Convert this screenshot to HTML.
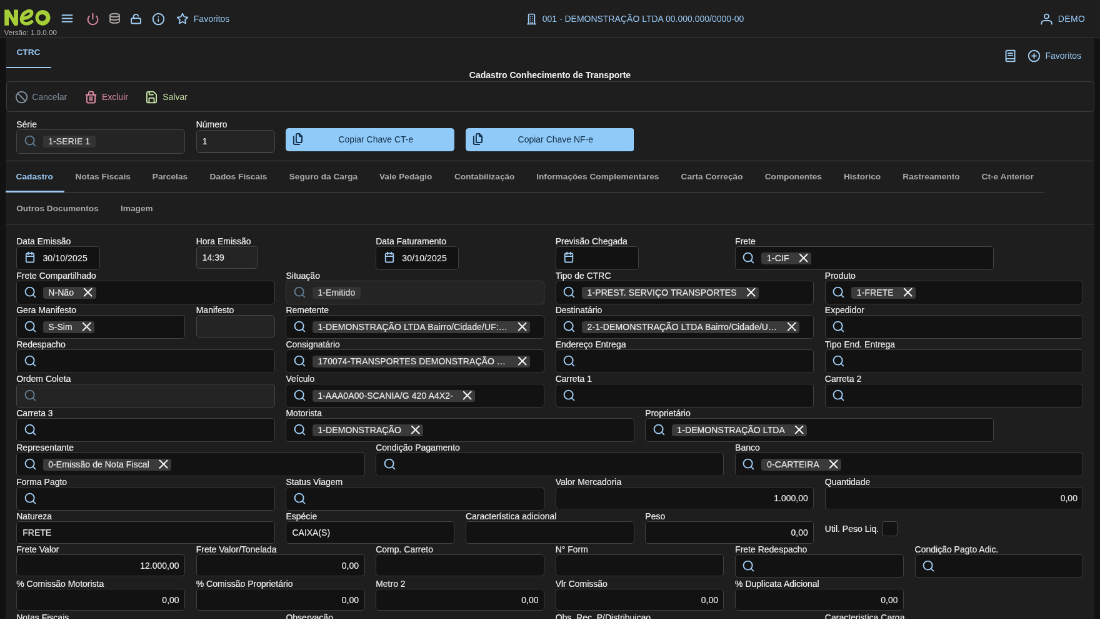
<!DOCTYPE html>
<html lang="pt-BR"><head><meta charset="utf-8"><title>NEO - CTRC</title>
<style>
html,body{margin:0;padding:0;background:#121212;overflow:hidden;}
body{width:1100px;height:619px;position:relative;font-family:"Liberation Sans",sans-serif;}
#app{position:absolute;left:0;top:0;width:1760px;height:991px;transform:scale(0.625);transform-origin:0 0;
 font-family:"Liberation Sans",sans-serif;font-size:14px;color:#dedede;overflow:hidden;will-change:transform;}
#app *{box-sizing:border-box;}
.abs{position:absolute;}
.ic{position:absolute;fill:none;stroke-linecap:round;stroke-linejoin:round;overflow:visible;}
.t{position:absolute;white-space:nowrap;line-height:18px;height:18px;}
.hdr{position:absolute;left:0;top:0;width:1760px;height:60px;background:#1e1e1e;border-bottom:1px solid #444;}
.panel{position:absolute;left:8.7px;top:61px;width:1742.6px;height:940px;background:#1e1e1e;}
.lbl{position:absolute;white-space:nowrap;font-size:14px;line-height:18px;height:18px;color:#ededed;-webkit-text-stroke:0.22px #ededed;}
.fld{position:absolute;height:37.5px;background:#121212;border:1px solid #414141;border-radius:5px;}
.fld.dis{background:#242424;border-color:#464646;}
.chip{position:absolute;top:8.9px;height:19px;background:#3a3a3a;border-radius:4px;color:#e8e8e8;-webkit-text-stroke:0.2px #e8e8e8;font-size:14px;line-height:19px;white-space:nowrap;padding:0 0 0 8.6px;overflow:hidden;display:flex;align-items:center;}
.ct{letter-spacing:0.09px;flex:1 1 auto;overflow:hidden;text-overflow:ellipsis;white-space:nowrap;min-width:0;}
.cx{flex:0 0 auto;width:23.4px;height:23.4px;margin-left:11.2px;fill:none;stroke:#f4f4f4;stroke-width:2.1;stroke-linecap:round;stroke-linejoin:round;}
.fld.dis .chip{background:#343434;color:#d8d8d8;}
.val{position:absolute;top:0;height:35.5px;line-height:35.5px;font-size:14px;color:#e8e8e8;-webkit-text-stroke:0.2px #e8e8e8;white-space:nowrap;}
.tab{position:absolute;font-weight:bold;font-size:13.7px;line-height:18px;color:#a9a9a9;white-space:nowrap;}
.hl{position:absolute;height:1px;background:#4a4a4a;}
.btn{position:absolute;background:#90caf9;border-radius:5px;color:#14304a;font-size:14px;text-align:center;}
</style></head>
<body>
<div id="app">
<div class="hdr"></div>
<svg class="abs" style="left:0;top:0;width:96px;height:64px" viewBox="0 0 60 40">
<path fill="#a6ce39" d="M4.5 25.5V9.7H8.9L13.8 18.2V9.7H18.1V23.8Q18.1 25.6 16.3 25.6H14.3L8.8 16.4V25.5Z"/>
<path fill="none" stroke="#a6ce39" stroke-width="3.4" stroke-linecap="round" stroke-linejoin="round" d="M24.0 18.3C27.4 18.1 31.6 15.9 31.7 12.9C31.8 10.8 28.9 10.6 26.8 11.5C23.5 12.9 21.3 16.2 21.5 19.4C21.7 22.5 24.4 23.9 27.1 23.6C29.0 23.4 30.6 22.7 31.7 21.6"/>
<path fill="#a6ce39" fill-rule="evenodd" d="M42.8 10A7.5 7.7 0 1 0 42.8 25.4A7.5 7.7 0 1 0 42.8 10ZM42.2 14.4A3.65 3.25 0 1 1 42.2 20.9A3.65 3.25 0 1 1 42.2 14.4Z"/>
</svg>
<div class="t" style="left:6.4px;top:42.5px;font-size:11.6px;color:#b5b5b5;">Versão: 1.0.0.00</div>
<svg class="ic" style="left:97.18px;top:19.05px;width:21px;height:21px;stroke:#9fcbf2;stroke-width:2.25;" viewBox="0 0 24 24"><path d="M3 12h18"/><path d="M3 6h18"/><path d="M3 18h18"/></svg>
<svg class="ic" style="left:137.98px;top:19.50px;width:21px;height:21px;stroke:#d98ba0;stroke-width:2.25;" viewBox="0 0 24 24"><path d="M12 2v10"/><path d="M18.4 6.6a9 9 0 1 1-12.77.04"/></svg>
<svg class="ic" style="left:173.02px;top:19.50px;width:21px;height:21px;stroke:#a8a29e;stroke-width:2.25;" viewBox="0 0 24 24"><ellipse cx="12" cy="5" rx="8.5" ry="3"/><path d="M3.5 5v11.2a8.5 3 0 0 0 17 0V5"/><path d="M3.5 10.6a8.5 3 0 0 0 17 0"/></svg>
<svg class="ic" style="left:207.42px;top:19.50px;width:21px;height:21px;stroke:#9fcbf2;stroke-width:2.25;" viewBox="0 0 24 24"><rect width="17" height="9.5" x="3.5" y="10.5" rx="2" ry="2"/><path d="M7.6 10.5V7.6a4.4 4.4 0 0 1 8.6-1.2"/></svg>
<svg class="ic" style="left:242.62px;top:19.50px;width:21px;height:21px;stroke:#9fcbf2;stroke-width:2.25;" viewBox="0 0 24 24"><circle cx="12" cy="12" r="10"/><path d="M12 16v-4"/><path d="M12 8h.01"/></svg>
<svg class="ic" style="left:281.52px;top:20.00px;width:20px;height:20px;stroke:#9fcbf2;stroke-width:2.25;" viewBox="0 0 24 24"><path d="M12 2l3.09 6.26L22 9.27l-5 4.87 1.18 6.88L12 17.77l-6.18 3.25L7 14.14 2 9.27l6.91-1.01L12 2z"/></svg>
<div class="t" style="left:309.8px;top:21px;color:#98c8f3;">Favoritos</div>
<svg class="ic" style="left:839.90px;top:19.50px;width:21px;height:21px;stroke:#9fcbf2;stroke-width:2.25;" viewBox="0 0 24 24"><path d="M6.6 21V4.6a1.6 1.6 0 0 1 1.6-1.6h7.6a1.6 1.6 0 0 1 1.6 1.6V21"/><path d="M4.4 21h15.2"/><path d="M10.6 21v-3.2h2.8V21" stroke-width="1.6"/><path d="M10 7.4h.01M14 7.4h.01M10 11.2h.01M14 11.2h.01M10 15h.01M14 15h.01" stroke-width="1.8"/></svg>
<div class="t" style="left:867.7px;top:21px;color:#98c8f3;">001 - DEMONSTRAÇÃO LTDA 00.000.000/0000-00</div>
<svg class="ic" style="left:1664.38px;top:19.50px;width:21px;height:21px;stroke:#9fcbf2;stroke-width:2.25;" viewBox="0 0 24 24"><path d="M2.6 21.2v-1.4a5 5 0 0 1 5-5h8.8a5 5 0 0 1 5 5v1.4"/><circle cx="12" cy="7" r="4"/></svg>
<div class="t" style="left:1692.8px;top:21px;color:#98c8f3;letter-spacing:0.35px;">DEMO</div>
<div class="panel"></div>
<div class="tab" style="left:26.4px;top:75.4px;color:#98c8f3;">CTRC</div>
<div class="abs" style="left:9.6px;top:106.8px;width:72.0px;height:2.4px;background:#9fcbf2;"></div>
<svg class="ic" style="left:1605.50px;top:78.50px;width:21px;height:21px;stroke:#9fcbf2;stroke-width:2.25;" viewBox="0 0 24 24"><path d="M4 19.5v-15A2.5 2.5 0 0 1 6.5 2H20v20H6.5a2.5 2.5 0 0 1 0-5H20"/><path d="M8 7h8"/><path d="M8 11h8"/></svg>
<svg class="ic" style="left:1643.90px;top:78.50px;width:21px;height:21px;stroke:#9fcbf2;stroke-width:2.25;" viewBox="0 0 24 24"><circle cx="12" cy="12" r="10"/><path d="M8 12h8"/><path d="M12 8v8"/></svg>
<div class="t" style="left:1672.5px;top:80px;color:#98c8f3;">Favoritos</div>
<div class="t" style="left:0;width:1760px;text-align:center;top:111px;font-weight:bold;color:#f0f0f0;">Cadastro Conhecimento de Transporte</div>
<div class="abs" style="left:9.6px;top:130.4px;width:1741px;height:48.3px;border:1px solid #3f3f3f;border-radius:6px;"></div>
<svg class="ic" style="left:23.58px;top:144.50px;width:21px;height:21px;stroke:#7f8e9c;stroke-width:2.25;" viewBox="0 0 24 24"><circle cx="12" cy="12" r="10"/><path d="m4.9 4.9 14.2 14.2"/></svg>
<div class="t" style="left:51.2px;top:146px;color:#7f8e9c;">Cancelar</div>
<svg class="ic" style="left:134.78px;top:144.50px;width:21px;height:21px;stroke:#dc8da2;stroke-width:2.25;" viewBox="0 0 24 24"><path d="M3 7.8h18"/><path d="M19.5 7.8v12.4a2 2 0 0 1-2 2h-11a2 2 0 0 1-2-2V7.8"/><path d="M7.9 7.8V3.8a2 2 0 0 1 2-2h4.2a2 2 0 0 1 2 2v4"/><path d="M10.2 11.5v6.5"/><path d="M13.8 11.5v6.5"/></svg>
<div class="t" style="left:162.9px;top:146px;color:#dc8da2;">Excluir</div>
<svg class="ic" style="left:231.90px;top:144.50px;width:21px;height:21px;stroke:#c5e1a5;stroke-width:2.25;" viewBox="0 0 24 24"><path d="M14.9 2.1a2 2 0 0 1 1.4.6l3.7 3.7a2 2 0 0 1 .6 1.4v12.1a2 2 0 0 1-2 2H5.4a2 2 0 0 1-2-2V4.1a2 2 0 0 1 2-2z"/><path d="M16.6 21.9v-7.4a1 1 0 0 0-1-1H8.4a1 1 0 0 0-1 1v7.4"/><path d="M7.6 2.1v4.4a1 1 0 0 0 1 1h6.2"/></svg>
<div class="t" style="left:260.2px;top:146px;color:#c5e1a5;">Salvar</div>
<div class="lbl" style="left:26.24px;top:189.50px;">Série</div>
<div class="fld dis" style="left:26.24px;top:207.20px;width:269.87px;height:38.8px;"><svg class="ic" style="left:10.40px;top:7.05px;width:21px;height:21px;stroke:#617d93;stroke-width:2.25;" viewBox="0 0 24 24"><circle cx="11" cy="11" r="8"/><path d="m21 21-4.3-4.3"/></svg><div class="chip" style="top:8.45px;left:41.4px;padding-right:8.6px;"><span class="ct">1-SERIE 1</span></div></div>
<div class="lbl" style="left:313.71px;top:189.50px;">Número</div>
<div class="fld dis" style="left:313.71px;top:208.20px;width:126.13px;height:35.5px;"><div class="val" style="left:9px;top:0.7px;height:33.5px;line-height:33.5px;">1</div></div>
<div class="btn" style="left:457.44px;top:204.5px;width:269.87px;height:37.5px;line-height:37.5px;padding-left:18px;">Copiar Chave CT-e<svg class="ic" style="left:8.70px;top:7.10px;width:21px;height:21px;stroke:#14304a;stroke-width:2.25;" viewBox="0 0 24 24"><path d="M14.9 2.2H11a2 2 0 0 0-2 2v12.1a2 2 0 0 0 2 2h6.4a2 2 0 0 0 2-2V6.9z"/><path d="M14.7 2.4v2.6a2 2 0 0 0 2 2h2.5"/><path d="M4.5 7.2v12.5a2 2 0 0 0 2 2H15"/></svg></div>
<div class="btn" style="left:744.90px;top:204.5px;width:269.87px;height:37.5px;line-height:37.5px;padding-left:18px;">Copiar Chave NF-e<svg class="ic" style="left:8.70px;top:7.10px;width:21px;height:21px;stroke:#14304a;stroke-width:2.25;" viewBox="0 0 24 24"><path d="M14.9 2.2H11a2 2 0 0 0-2 2v12.1a2 2 0 0 0 2 2h6.4a2 2 0 0 0 2-2V6.9z"/><path d="M14.7 2.4v2.6a2 2 0 0 0 2 2h2.5"/><path d="M4.5 7.2v12.5a2 2 0 0 0 2 2H15"/></svg></div>
<div class="hl" style="left:9px;top:257px;width:1742px;"></div>
<div class="tab" style="left:25.6px;top:274.3px;color:#98c8f3;">Cadastro</div>
<div class="tab" style="left:120.6px;top:274.3px;color:#a9a9a9;">Notas Fiscais</div>
<div class="tab" style="left:243.8px;top:274.3px;color:#a9a9a9;">Parcelas</div>
<div class="tab" style="left:335.4px;top:274.3px;color:#a9a9a9;">Dados Fiscais</div>
<div class="tab" style="left:462.7px;top:274.3px;color:#a9a9a9;">Seguro da Carga</div>
<div class="tab" style="left:607.0px;top:274.3px;color:#a9a9a9;">Vale Pedágio</div>
<div class="tab" style="left:726.9px;top:274.3px;color:#a9a9a9;">Contabilização</div>
<div class="tab" style="left:858.2px;top:274.3px;color:#a9a9a9;">Informações Complementares</div>
<div class="tab" style="left:1089.6px;top:274.3px;color:#a9a9a9;">Carta Correção</div>
<div class="tab" style="left:1223.7px;top:274.3px;color:#a9a9a9;">Componentes</div>
<div class="tab" style="left:1349.9px;top:274.3px;color:#a9a9a9;">Historico</div>
<div class="tab" style="left:1444.3px;top:274.3px;color:#a9a9a9;">Rastreamento</div>
<div class="tab" style="left:1570.6px;top:274.3px;color:#a9a9a9;">Ct-e Anterior</div>
<div class="hl" style="left:9px;top:306.5px;width:1662.4px;"></div>
<div class="abs" style="left:9px;top:305.3px;width:94.2px;height:2.4px;background:#9fcbf2;"></div>
<div class="tab" style="left:26.2px;top:325.1px;">Outros Documentos</div>
<div class="tab" style="left:193.0px;top:325.1px;">Imagem</div>
<div class="hl" style="left:9px;top:358px;width:1742px;"></div>
<div class="lbl" style="left:26.24px;top:377.20px;">Data Emissão</div>
<div class="fld" style="left:26.24px;top:394.00px;width:133.28px;height:37.5px;"><svg class="ic" style="left:10.40px;top:7.10px;width:20px;height:20px;stroke:#9fcbf2;stroke-width:2.25;" viewBox="0 0 24 24"><path d="M8.6 2v4"/><path d="M15.4 2v4"/><rect width="15" height="17" x="4.5" y="4" rx="2"/><path d="M4.5 9.6h15"/></svg><div class="val" style="left:41.2px;top:1.3px;letter-spacing:0.14px;">30/10/2025</div></div>
<div class="lbl" style="left:313.71px;top:377.20px;">Hora Emissão</div>
<div class="fld dis" style="left:313.71px;top:394.00px;width:99.20px;height:35.5px;"><div class="val" style="left:9px;top:0.7px;height:33.5px;line-height:33.5px;">14:39</div></div>
<div class="lbl" style="left:601.17px;top:377.20px;">Data Faturamento</div>
<div class="fld" style="left:601.17px;top:394.00px;width:133.28px;height:37.5px;"><svg class="ic" style="left:10.40px;top:7.10px;width:20px;height:20px;stroke:#9fcbf2;stroke-width:2.25;" viewBox="0 0 24 24"><path d="M8.6 2v4"/><path d="M15.4 2v4"/><rect width="15" height="17" x="4.5" y="4" rx="2"/><path d="M4.5 9.6h15"/></svg><div class="val" style="left:41.2px;top:1.3px;letter-spacing:0.14px;">30/10/2025</div></div>
<div class="lbl" style="left:888.64px;top:377.20px;">Previsão Chegada</div>
<div class="fld" style="left:888.64px;top:394.00px;width:133.28px;height:37.5px;"><svg class="ic" style="left:10.40px;top:7.10px;width:20px;height:20px;stroke:#9fcbf2;stroke-width:2.25;" viewBox="0 0 24 24"><path d="M8.6 2v4"/><path d="M15.4 2v4"/><rect width="15" height="17" x="4.5" y="4" rx="2"/><path d="M4.5 9.6h15"/></svg></div>
<div class="lbl" style="left:1176.10px;top:377.20px;">Frete</div>
<div class="fld" style="left:1176.10px;top:394.00px;width:413.60px;height:37.5px;"><svg class="ic" style="left:10.40px;top:7.20px;width:21px;height:21px;stroke:#9fcbf2;stroke-width:2.25;" viewBox="0 0 24 24"><circle cx="11" cy="11" r="8"/><path d="m21 21-4.3-4.3"/></svg><div class="chip" style="top:8.60px;left:41.4px;padding-right:0.8px;"><span class="ct">1-CIF</span><svg class="cx" viewBox="0 0 24 24"><path d="M18 6 6 18"/><path d="m6 6 12 12"/></svg></div></div>
<div class="lbl" style="left:26.24px;top:432.20px;">Frete Compartilhado</div>
<div class="fld" style="left:26.24px;top:449.00px;width:413.60px;height:37.5px;"><svg class="ic" style="left:10.40px;top:7.20px;width:21px;height:21px;stroke:#9fcbf2;stroke-width:2.25;" viewBox="0 0 24 24"><circle cx="11" cy="11" r="8"/><path d="m21 21-4.3-4.3"/></svg><div class="chip" style="top:8.60px;left:41.4px;padding-right:0.8px;"><span class="ct">N-Não</span><svg class="cx" viewBox="0 0 24 24"><path d="M18 6 6 18"/><path d="m6 6 12 12"/></svg></div></div>
<div class="lbl" style="left:457.44px;top:432.20px;">Situação</div>
<div class="fld dis" style="left:457.44px;top:449.00px;width:413.60px;height:37.5px;"><svg class="ic" style="left:10.40px;top:7.20px;width:21px;height:21px;stroke:#617d93;stroke-width:2.25;" viewBox="0 0 24 24"><circle cx="11" cy="11" r="8"/><path d="m21 21-4.3-4.3"/></svg><div class="chip" style="top:8.60px;left:41.4px;padding-right:8.6px;"><span class="ct">1-Emitido</span></div></div>
<div class="lbl" style="left:888.64px;top:432.20px;">Tipo de CTRC</div>
<div class="fld" style="left:888.64px;top:449.00px;width:413.60px;height:37.5px;"><svg class="ic" style="left:10.40px;top:7.20px;width:21px;height:21px;stroke:#9fcbf2;stroke-width:2.25;" viewBox="0 0 24 24"><circle cx="11" cy="11" r="8"/><path d="m21 21-4.3-4.3"/></svg><div class="chip" style="top:8.60px;left:41.4px;padding-right:0.8px;"><span class="ct">1-PREST. SERVIÇO TRANSPORTES</span><svg class="cx" viewBox="0 0 24 24"><path d="M18 6 6 18"/><path d="m6 6 12 12"/></svg></div></div>
<div class="lbl" style="left:1319.84px;top:432.20px;">Produto</div>
<div class="fld" style="left:1319.84px;top:449.00px;width:413.60px;height:37.5px;"><svg class="ic" style="left:10.40px;top:7.20px;width:21px;height:21px;stroke:#9fcbf2;stroke-width:2.25;" viewBox="0 0 24 24"><circle cx="11" cy="11" r="8"/><path d="m21 21-4.3-4.3"/></svg><div class="chip" style="top:8.60px;left:41.4px;padding-right:0.8px;"><span class="ct">1-FRETE</span><svg class="cx" viewBox="0 0 24 24"><path d="M18 6 6 18"/><path d="m6 6 12 12"/></svg></div></div>
<div class="lbl" style="left:26.24px;top:487.20px;">Gera Manifesto</div>
<div class="fld" style="left:26.24px;top:504.00px;width:269.87px;height:37.5px;"><svg class="ic" style="left:10.40px;top:7.20px;width:21px;height:21px;stroke:#9fcbf2;stroke-width:2.25;" viewBox="0 0 24 24"><circle cx="11" cy="11" r="8"/><path d="m21 21-4.3-4.3"/></svg><div class="chip" style="top:8.60px;left:41.4px;padding-right:0.8px;"><span class="ct">S-Sim</span><svg class="cx" viewBox="0 0 24 24"><path d="M18 6 6 18"/><path d="m6 6 12 12"/></svg></div></div>
<div class="lbl" style="left:313.71px;top:487.20px;">Manifesto</div>
<div class="fld dis" style="left:313.71px;top:504.00px;width:126.13px;height:35.5px;"><div class="val" style="left:9px;top:0.7px;height:33.5px;line-height:33.5px;"></div></div>
<div class="lbl" style="left:457.44px;top:487.20px;">Remetente</div>
<div class="fld" style="left:457.44px;top:504.00px;width:413.60px;height:37.5px;"><svg class="ic" style="left:10.40px;top:7.20px;width:21px;height:21px;stroke:#9fcbf2;stroke-width:2.25;" viewBox="0 0 24 24"><circle cx="11" cy="11" r="8"/><path d="m21 21-4.3-4.3"/></svg><div class="chip" style="top:8.60px;left:41.4px;padding-right:0.8px;width:348.2px;"><span class="ct"><span style="letter-spacing:0.09px">1-DEMONSTRAÇÃO LTDA Bairro/Cidade/UF:…</span></span><svg class="cx" viewBox="0 0 24 24"><path d="M18 6 6 18"/><path d="m6 6 12 12"/></svg></div></div>
<div class="lbl" style="left:888.64px;top:487.20px;">Destinatário</div>
<div class="fld" style="left:888.64px;top:504.00px;width:413.60px;height:37.5px;"><svg class="ic" style="left:10.40px;top:7.20px;width:21px;height:21px;stroke:#9fcbf2;stroke-width:2.25;" viewBox="0 0 24 24"><circle cx="11" cy="11" r="8"/><path d="m21 21-4.3-4.3"/></svg><div class="chip" style="top:8.60px;left:41.4px;padding-right:0.8px;width:348.2px;"><span class="ct"><span style="letter-spacing:0.09px">2-1-DEMONSTRAÇÃO LTDA Bairro/Cidade/U…</span></span><svg class="cx" viewBox="0 0 24 24"><path d="M18 6 6 18"/><path d="m6 6 12 12"/></svg></div></div>
<div class="lbl" style="left:1319.84px;top:487.20px;">Expedidor</div>
<div class="fld" style="left:1319.84px;top:504.00px;width:413.60px;height:37.5px;"><svg class="ic" style="left:10.40px;top:7.20px;width:21px;height:21px;stroke:#9fcbf2;stroke-width:2.25;" viewBox="0 0 24 24"><circle cx="11" cy="11" r="8"/><path d="m21 21-4.3-4.3"/></svg></div>
<div class="lbl" style="left:26.24px;top:542.20px;">Redespacho</div>
<div class="fld" style="left:26.24px;top:559.00px;width:413.60px;height:37.5px;"><svg class="ic" style="left:10.40px;top:7.20px;width:21px;height:21px;stroke:#9fcbf2;stroke-width:2.25;" viewBox="0 0 24 24"><circle cx="11" cy="11" r="8"/><path d="m21 21-4.3-4.3"/></svg></div>
<div class="lbl" style="left:457.44px;top:542.20px;">Consignatário</div>
<div class="fld" style="left:457.44px;top:559.00px;width:413.60px;height:37.5px;"><svg class="ic" style="left:10.40px;top:7.20px;width:21px;height:21px;stroke:#9fcbf2;stroke-width:2.25;" viewBox="0 0 24 24"><circle cx="11" cy="11" r="8"/><path d="m21 21-4.3-4.3"/></svg><div class="chip" style="top:8.60px;left:41.4px;padding-right:0.8px;width:348.2px;"><span class="ct"><span style="letter-spacing:0.09px">170074-TRANSPORTES DEMONSTRAÇÃO …</span></span><svg class="cx" viewBox="0 0 24 24"><path d="M18 6 6 18"/><path d="m6 6 12 12"/></svg></div></div>
<div class="lbl" style="left:888.64px;top:542.20px;">Endereço Entrega</div>
<div class="fld" style="left:888.64px;top:559.00px;width:413.60px;height:37.5px;"><svg class="ic" style="left:10.40px;top:7.20px;width:21px;height:21px;stroke:#9fcbf2;stroke-width:2.25;" viewBox="0 0 24 24"><circle cx="11" cy="11" r="8"/><path d="m21 21-4.3-4.3"/></svg></div>
<div class="lbl" style="left:1319.84px;top:542.20px;">Tipo End. Entrega</div>
<div class="fld" style="left:1319.84px;top:559.00px;width:413.60px;height:37.5px;"><svg class="ic" style="left:10.40px;top:7.20px;width:21px;height:21px;stroke:#9fcbf2;stroke-width:2.25;" viewBox="0 0 24 24"><circle cx="11" cy="11" r="8"/><path d="m21 21-4.3-4.3"/></svg></div>
<div class="lbl" style="left:26.24px;top:597.20px;">Ordem Coleta</div>
<div class="fld dis" style="left:26.24px;top:614.00px;width:413.60px;height:37.5px;"><svg class="ic" style="left:10.40px;top:7.20px;width:21px;height:21px;stroke:#617d93;stroke-width:2.25;" viewBox="0 0 24 24"><circle cx="11" cy="11" r="8"/><path d="m21 21-4.3-4.3"/></svg></div>
<div class="lbl" style="left:457.44px;top:597.20px;">Veículo</div>
<div class="fld" style="left:457.44px;top:614.00px;width:413.60px;height:37.5px;"><svg class="ic" style="left:10.40px;top:7.20px;width:21px;height:21px;stroke:#9fcbf2;stroke-width:2.25;" viewBox="0 0 24 24"><circle cx="11" cy="11" r="8"/><path d="m21 21-4.3-4.3"/></svg><div class="chip" style="top:8.60px;left:41.4px;padding-right:0.8px;"><span class="ct">1-AAA0A00-SCANIA/G 420 A4X2-</span><svg class="cx" viewBox="0 0 24 24"><path d="M18 6 6 18"/><path d="m6 6 12 12"/></svg></div></div>
<div class="lbl" style="left:888.64px;top:597.20px;">Carreta 1</div>
<div class="fld" style="left:888.64px;top:614.00px;width:413.60px;height:37.5px;"><svg class="ic" style="left:10.40px;top:7.20px;width:21px;height:21px;stroke:#9fcbf2;stroke-width:2.25;" viewBox="0 0 24 24"><circle cx="11" cy="11" r="8"/><path d="m21 21-4.3-4.3"/></svg></div>
<div class="lbl" style="left:1319.84px;top:597.20px;">Carreta 2</div>
<div class="fld" style="left:1319.84px;top:614.00px;width:413.60px;height:37.5px;"><svg class="ic" style="left:10.40px;top:7.20px;width:21px;height:21px;stroke:#9fcbf2;stroke-width:2.25;" viewBox="0 0 24 24"><circle cx="11" cy="11" r="8"/><path d="m21 21-4.3-4.3"/></svg></div>
<div class="lbl" style="left:26.24px;top:652.20px;">Carreta 3</div>
<div class="fld" style="left:26.24px;top:669.00px;width:413.60px;height:37.5px;"><svg class="ic" style="left:10.40px;top:7.20px;width:21px;height:21px;stroke:#9fcbf2;stroke-width:2.25;" viewBox="0 0 24 24"><circle cx="11" cy="11" r="8"/><path d="m21 21-4.3-4.3"/></svg></div>
<div class="lbl" style="left:457.44px;top:652.20px;">Motorista</div>
<div class="fld" style="left:457.44px;top:669.00px;width:557.33px;height:37.5px;"><svg class="ic" style="left:10.40px;top:7.20px;width:21px;height:21px;stroke:#9fcbf2;stroke-width:2.25;" viewBox="0 0 24 24"><circle cx="11" cy="11" r="8"/><path d="m21 21-4.3-4.3"/></svg><div class="chip" style="top:8.60px;left:41.4px;padding-right:0.8px;"><span class="ct">1-DEMONSTRAÇÃO</span><svg class="cx" viewBox="0 0 24 24"><path d="M18 6 6 18"/><path d="m6 6 12 12"/></svg></div></div>
<div class="lbl" style="left:1032.37px;top:652.20px;">Proprietário</div>
<div class="fld" style="left:1032.37px;top:669.00px;width:557.33px;height:37.5px;"><svg class="ic" style="left:10.40px;top:7.20px;width:21px;height:21px;stroke:#9fcbf2;stroke-width:2.25;" viewBox="0 0 24 24"><circle cx="11" cy="11" r="8"/><path d="m21 21-4.3-4.3"/></svg><div class="chip" style="top:8.60px;left:41.4px;padding-right:0.8px;"><span class="ct">1-DEMONSTRAÇÃO LTDA</span><svg class="cx" viewBox="0 0 24 24"><path d="M18 6 6 18"/><path d="m6 6 12 12"/></svg></div></div>
<div class="lbl" style="left:26.24px;top:707.20px;">Representante</div>
<div class="fld" style="left:26.24px;top:724.00px;width:557.33px;height:37.5px;"><svg class="ic" style="left:10.40px;top:7.20px;width:21px;height:21px;stroke:#9fcbf2;stroke-width:2.25;" viewBox="0 0 24 24"><circle cx="11" cy="11" r="8"/><path d="m21 21-4.3-4.3"/></svg><div class="chip" style="top:8.60px;left:41.4px;padding-right:0.8px;"><span class="ct">0-Emissão de Nota Fiscal</span><svg class="cx" viewBox="0 0 24 24"><path d="M18 6 6 18"/><path d="m6 6 12 12"/></svg></div></div>
<div class="lbl" style="left:601.17px;top:707.20px;">Condição Pagamento</div>
<div class="fld" style="left:601.17px;top:724.00px;width:557.33px;height:37.5px;"><svg class="ic" style="left:10.40px;top:7.20px;width:21px;height:21px;stroke:#9fcbf2;stroke-width:2.25;" viewBox="0 0 24 24"><circle cx="11" cy="11" r="8"/><path d="m21 21-4.3-4.3"/></svg></div>
<div class="lbl" style="left:1176.10px;top:707.20px;">Banco</div>
<div class="fld" style="left:1176.10px;top:724.00px;width:557.33px;height:37.5px;"><svg class="ic" style="left:10.40px;top:7.20px;width:21px;height:21px;stroke:#9fcbf2;stroke-width:2.25;" viewBox="0 0 24 24"><circle cx="11" cy="11" r="8"/><path d="m21 21-4.3-4.3"/></svg><div class="chip" style="top:8.60px;left:41.4px;padding-right:0.8px;"><span class="ct">0-CARTEIRA</span><svg class="cx" viewBox="0 0 24 24"><path d="M18 6 6 18"/><path d="m6 6 12 12"/></svg></div></div>
<div class="lbl" style="left:26.24px;top:762.20px;">Forma Pagto</div>
<div class="fld" style="left:26.24px;top:779.00px;width:413.60px;height:37.5px;"><svg class="ic" style="left:10.40px;top:7.20px;width:21px;height:21px;stroke:#9fcbf2;stroke-width:2.25;" viewBox="0 0 24 24"><circle cx="11" cy="11" r="8"/><path d="m21 21-4.3-4.3"/></svg></div>
<div class="lbl" style="left:457.44px;top:762.20px;">Status Viagem</div>
<div class="fld" style="left:457.44px;top:779.00px;width:413.60px;height:37.5px;"><svg class="ic" style="left:10.40px;top:7.20px;width:21px;height:21px;stroke:#9fcbf2;stroke-width:2.25;" viewBox="0 0 24 24"><circle cx="11" cy="11" r="8"/><path d="m21 21-4.3-4.3"/></svg></div>
<div class="lbl" style="left:888.64px;top:762.20px;">Valor Mercadoria</div>
<div class="fld" style="left:888.64px;top:779.00px;width:413.60px;height:35.5px;"><div class="val" style="right:8.5px;top:0.7px;height:33.5px;line-height:33.5px;">1.000,00</div></div>
<div class="lbl" style="left:1319.84px;top:762.20px;">Quantidade</div>
<div class="fld" style="left:1319.84px;top:779.00px;width:413.60px;height:35.5px;"><div class="val" style="right:8.5px;top:0.7px;height:33.5px;line-height:33.5px;">0,00</div></div>
<div class="lbl" style="left:26.24px;top:817.20px;">Natureza</div>
<div class="fld" style="left:26.24px;top:834.00px;width:413.60px;height:35.5px;"><div class="val" style="left:9px;top:0.7px;height:33.5px;line-height:33.5px;">FRETE</div></div>
<div class="lbl" style="left:457.44px;top:817.20px;">Espécie</div>
<div class="fld" style="left:457.44px;top:834.00px;width:269.87px;height:35.5px;"><div class="val" style="left:9px;top:0.7px;height:33.5px;line-height:33.5px;">CAIXA(S)</div></div>
<div class="lbl" style="left:744.90px;top:817.20px;">Característica adicional</div>
<div class="fld" style="left:744.90px;top:834.00px;width:269.87px;height:35.5px;"><div class="val" style="left:9px;top:0.7px;height:33.5px;line-height:33.5px;"></div></div>
<div class="lbl" style="left:1032.37px;top:817.20px;">Peso</div>
<div class="fld" style="left:1032.37px;top:834.00px;width:269.87px;height:35.5px;"><div class="val" style="right:8.5px;top:0.7px;height:33.5px;line-height:33.5px;">0,00</div></div>
<div class="lbl" style="left:1319.84px;top:836.80px;">Util. Peso Liq.</div>
<div class="abs" style="left:1411.2px;top:833.6px;width:24.8px;height:24.8px;border:1px solid #4a4a4a;border-radius:4px;background:#121212;"></div>
<div class="lbl" style="left:26.24px;top:870.08px;">Frete Valor</div>
<div class="fld" style="left:26.24px;top:886.88px;width:269.87px;height:35.5px;"><div class="val" style="right:8.5px;top:0.7px;height:33.5px;line-height:33.5px;">12.000,00</div></div>
<div class="lbl" style="left:313.71px;top:870.08px;">Frete Valor/Tonelada</div>
<div class="fld" style="left:313.71px;top:886.88px;width:269.87px;height:35.5px;"><div class="val" style="right:8.5px;top:0.7px;height:33.5px;line-height:33.5px;">0,00</div></div>
<div class="lbl" style="left:601.17px;top:870.08px;">Comp. Carreto</div>
<div class="fld" style="left:601.17px;top:886.88px;width:269.87px;height:35.5px;"><div class="val" style="left:9px;top:0.7px;height:33.5px;line-height:33.5px;"></div></div>
<div class="lbl" style="left:888.64px;top:870.08px;">N° Form</div>
<div class="fld" style="left:888.64px;top:886.88px;width:269.87px;height:35.5px;"><div class="val" style="left:9px;top:0.7px;height:33.5px;line-height:33.5px;"></div></div>
<div class="lbl" style="left:1176.10px;top:870.08px;">Frete Redespacho</div>
<div class="fld" style="left:1176.10px;top:886.88px;width:269.87px;height:37.5px;"><svg class="ic" style="left:10.40px;top:7.20px;width:21px;height:21px;stroke:#9fcbf2;stroke-width:2.25;" viewBox="0 0 24 24"><circle cx="11" cy="11" r="8"/><path d="m21 21-4.3-4.3"/></svg></div>
<div class="lbl" style="left:1463.57px;top:870.08px;">Condição Pagto Adic.</div>
<div class="fld" style="left:1463.57px;top:886.88px;width:269.87px;height:37.5px;"><svg class="ic" style="left:10.40px;top:7.20px;width:21px;height:21px;stroke:#9fcbf2;stroke-width:2.25;" viewBox="0 0 24 24"><circle cx="11" cy="11" r="8"/><path d="m21 21-4.3-4.3"/></svg></div>
<div class="lbl" style="left:26.24px;top:925.08px;">% Comissão Motorista</div>
<div class="fld" style="left:26.24px;top:941.88px;width:269.87px;height:35.5px;"><div class="val" style="right:8.5px;top:0.7px;height:33.5px;line-height:33.5px;">0,00</div></div>
<div class="lbl" style="left:313.71px;top:925.08px;">% Comissão Proprietário</div>
<div class="fld" style="left:313.71px;top:941.88px;width:269.87px;height:35.5px;"><div class="val" style="right:8.5px;top:0.7px;height:33.5px;line-height:33.5px;">0,00</div></div>
<div class="lbl" style="left:601.17px;top:925.08px;">Metro 2</div>
<div class="fld" style="left:601.17px;top:941.88px;width:269.87px;height:35.5px;"><div class="val" style="right:8.5px;top:0.7px;height:33.5px;line-height:33.5px;">0,00</div></div>
<div class="lbl" style="left:888.64px;top:925.08px;">Vlr Comissão</div>
<div class="fld" style="left:888.64px;top:941.88px;width:269.87px;height:35.5px;"><div class="val" style="right:8.5px;top:0.7px;height:33.5px;line-height:33.5px;">0,00</div></div>
<div class="lbl" style="left:1176.10px;top:925.08px;">% Duplicata Adicional</div>
<div class="fld" style="left:1176.10px;top:941.88px;width:269.87px;height:35.5px;"><div class="val" style="right:8.5px;top:0.7px;height:33.5px;line-height:33.5px;">0,00</div></div>
<div class="lbl" style="left:26.24px;top:978.58px;">Notas Fiscais</div>
<div class="lbl" style="left:457.44px;top:978.58px;">Observação</div>
<div class="lbl" style="left:888.64px;top:978.58px;">Obs. Rec. P/Distribuicao</div>
<div class="lbl" style="left:1319.84px;top:978.58px;">Caracteristica Carga</div>
</div>
</body></html>
